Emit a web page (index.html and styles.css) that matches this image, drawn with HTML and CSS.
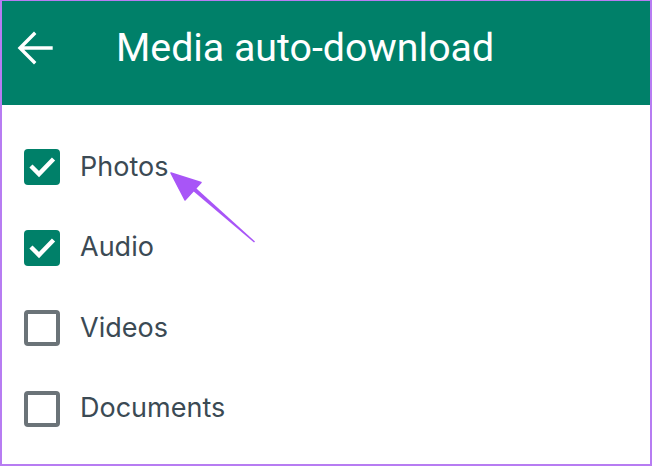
FILE: index.html
```html
<!DOCTYPE html>
<html>
<head>
<meta charset="utf-8">
<link rel="stylesheet" href="styles.css">
</head>
<body>
<div class="frame">
  <header class="appbar">
    <svg class="back" width="36" height="36" viewBox="0 0 36 36" aria-hidden="true">
      <path d="M34 18H4M17 4L3 18l14 14" fill="none" stroke="#fff" stroke-width="3.4" stroke-linecap="square" stroke-linejoin="miter"/>
    </svg>
    <h1 class="title">Media auto-download</h1>
  </header>
  <ul class="options">
    <li class="option"><span class="box checked"><svg viewBox="0 0 36 36" width="36" height="36"><path d="M8.5 18.5l6.5 6.5L28 11.5" fill="none" stroke="#fff" stroke-width="4.4" stroke-linecap="square"/></svg></span><span class="label">Photos</span></li>
    <li class="option"><span class="box checked"><svg viewBox="0 0 36 36" width="36" height="36"><path d="M8.5 18.5l6.5 6.5L28 11.5" fill="none" stroke="#fff" stroke-width="4.4" stroke-linecap="square"/></svg></span><span class="label">Audio</span></li>
    <li class="option"><span class="box"></span><span class="label">Videos</span></li>
    <li class="option"><span class="box"></span><span class="label">Documents</span></li>
  </ul>
  <svg class="pointer" width="100" height="90" viewBox="0 0 100 90" aria-hidden="true">
    <path d="M27 28.5L30 25.5L93 82.5L92 83.5Z" fill="#a855f7"/>
    <path d="M9 14L39 23.5L23 41Z" fill="#a855f7" stroke="#a855f7" stroke-width="1.5" stroke-linejoin="round"/>
  </svg>
</div>
</body>
</html>
```

FILE: styles.css
```css
html, body {
  margin: 0;
  padding: 0;
  background: #fff;
}
.frame {
  position: relative;
  width: 652px;
  height: 466px;
  box-sizing: border-box;
  border: 2px solid #b77cf2;
  border-top-width: 1px;
  overflow: hidden;
  font-family: Inter, "Noto Sans", sans-serif;
}
.appbar {
  height: 104px;
  background: #008069;
  display: flex;
  align-items: center;
  padding: 0 0 10px 15px;
  box-sizing: border-box;
}
.back {
  display: block;
  flex: none;
}
.title {
  margin: 0 0 0 63px;
  font-family: Roboto, sans-serif;
  font-weight: 400;
  font-size: 39.3px;
  color: #fff;
  letter-spacing: 0;
}
.options {
  list-style: none;
  margin: 0;
  padding: 44px 0 0 22px;
}
.option {
  display: flex;
  align-items: center;
  height: 36px;
  margin-bottom: 44.5px;
}
.box {
  width: 36px;
  height: 36px;
  box-sizing: border-box;
  border: 4px solid #6b7378;
  border-radius: 4px;
  flex: none;
}
.box.checked {
  background: #008069;
  border: none;
}
.box svg {
  display: block;
}
.label {
  margin-left: 20px;
  font-size: 27px;
  color: #3b4a54;
  padding-bottom: 2px;
}
.pointer {
  position: absolute;
  left: 160px;
  top: 158px;
}
```
